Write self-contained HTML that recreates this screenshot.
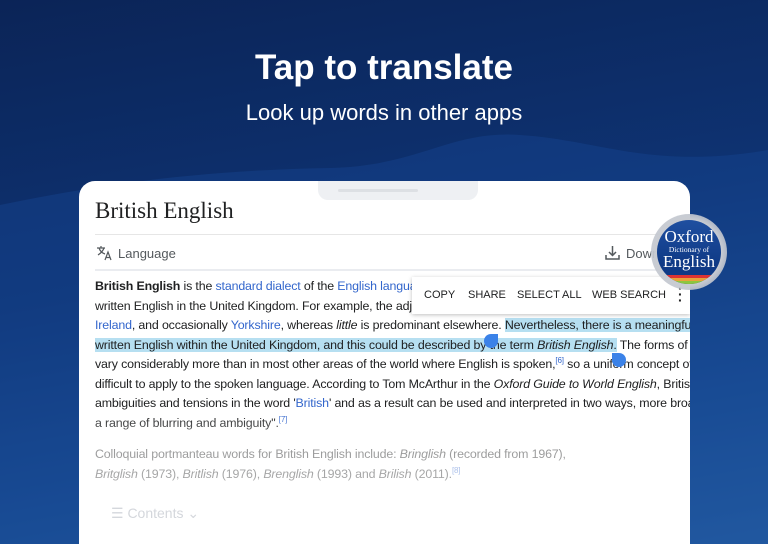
<!DOCTYPE html>
<html style="overflow:hidden;height:544px"><head><meta charset="utf-8"><style>
body{margin:0;width:768px;height:544px;overflow:hidden;position:relative;font-family:"Liberation Sans",sans-serif;
background:linear-gradient(170deg,#0b2457 0%,#0e3373 45%,#1a4f96 75%,#2a68ad 100%);}
.wave{position:absolute;left:0;top:0}
h1{position:absolute;top:48px;width:100%;text-align:center;margin:0;color:#fff;font-size:35px;font-weight:bold}
.sub{position:absolute;top:100px;width:100%;text-align:center;color:#fff;font-size:22px}
.card{position:absolute;left:79px;top:181px;width:611px;height:363px;background:#fff;border-radius:16px 16px 0 0;overflow:hidden}
.notch{position:absolute;left:239px;top:0;width:160px;height:19px;background:#eef0f3;border-radius:0 0 10px 10px}
.notch i{position:absolute;left:20px;top:8px;width:80px;height:3px;background:#dde0e4;border-radius:2px}
.t{position:absolute;left:16px;top:17px;font-family:"Liberation Serif",serif;font-size:23px;color:#202122}
.hr{position:absolute;left:16px;right:0;height:1px;background:#e6e6e6}
.lang{position:absolute;left:39px;top:65px;font-size:13px;color:#54595d}
.body{position:absolute;left:16px;top:96px;width:640px;font-size:12.4px;letter-spacing:-0.15px;line-height:19.5px;color:#202122;white-space:nowrap}
a{color:#3366cc;text-decoration:none}
.hl{background:#b6dff1}
sup{font-size:8px;color:#3366cc;line-height:0}
.menu{position:absolute;left:333px;top:96px;width:278px;height:37px;background:#fff;box-shadow:0 1px 4px rgba(0,0,0,.25);font-size:11px;color:#202122}
.menu span{position:absolute;top:12px}
.fade{position:absolute;left:0;top:230px;width:100%;height:133px;background:linear-gradient(rgba(255,255,255,0) 0%,rgba(255,255,255,.55) 30%,rgba(255,255,255,.75) 100%)}
.logo{position:absolute;left:651px;top:214px;width:76px;height:76px;border-radius:50%;background:radial-gradient(circle,#c9ccd2 60%,rgba(160,170,190,.6) 100%)}
.logo .in{position:absolute;left:6px;top:6px;width:64px;height:64px;border-radius:50%;overflow:hidden;background:linear-gradient(#1f4fa0,#0f3a86 70%);color:#fff;font-family:"Liberation Serif",serif;text-align:center}
.dot{position:absolute;width:14px;height:14px;background:#3b82e8;border-radius:50%}
</style></head><body>
<svg class="wave" width="768" height="544"><path d="M0 205 C120 180 220 170 330 168 C420 166 450 130 520 135 C600 140 650 170 768 150 L768 544 L0 544Z" fill="#164590" opacity=".45"/></svg>
<h1>Tap to translate</h1>
<div class="sub">Look up words in other apps</div>
<div class="card">
<div class="notch"><i></i></div>
<div class="t">British English</div>
<div class="hr" style="top:53px"></div>
<svg style="position:absolute;left:17px;top:64px" width="16" height="16" viewBox="0 0 16 16" fill="none" stroke="#54595d" stroke-width="1.2"><path d="M1 3h8M5 1v2M3 3c1 3 3 5 6 6M8 3c-1 3-3 5-6 7M9 15l3-8 3 8M10 12.5h4"/></svg>
<div class="lang">Language</div>
<svg style="position:absolute;left:525px;top:63px" width="17" height="17" viewBox="0 0 17 17" fill="none" stroke="#54595d" stroke-width="1.5"><path d="M8.5 2v9M5 8l3.5 3.5L12 8M2 11v4h13v-4"/></svg>
<div class="lang" style="left:547px">Download</div>
<div class="hr" style="top:88px;height:2px;background:#eaecf0"></div>
<div class="body">
<b>British English</b> is the <a>standard dialect</a> of the <a>English language</a> as spoken and<br>
written English in the United Kingdom. For example, the adjective wee is almost exclusively used in<br>
<a>Ireland</a>, and occasionally <a>Yorkshire</a>, whereas <i>little</i> is predominant elsewhere. <span class="hl">Nevertheless, there is a meaningful</span><br>
<span class="hl">written English within the United Kingdom, and this could be described by the term <i>British English</i>.</span> The forms of<br>
vary considerably more than in most other areas of the world where English is spoken,<sup>[6]</sup> so a uniform concept of<br>
difficult to apply to the spoken language. According to Tom McArthur in the <i>Oxford Guide to World English</i>, British<br>
ambiguities and tensions in the word '<a>British</a>' and as a result can be used and interpreted in two ways, more broadly<br>
a range of blurring and ambiguity".<sup>[7]</sup><br>
<div style="height:12px"></div>
Colloquial portmanteau words for British English include: <i>Bringlish</i> (recorded from 1967),<br>
<i>Britglish</i> (1973), <i>Britlish</i> (1976), <i>Brenglish</i> (1993) and <i>Brilish</i> (2011).<sup>[8]</sup>
</div>
<div class="fade"></div>
<div style="position:absolute;left:32px;top:324px;font-size:14px;color:#d4d7dc">☰ Contents ⌄</div>
<div class="menu"><span style="left:12px">COPY</span><span style="left:56px">SHARE</span><span style="left:105px">SELECT ALL</span><span style="left:180px">WEB SEARCH</span><span style="left:266px;top:8px;font-size:14px;font-weight:bold;line-height:6px">·<br>·<br>·</span></div>
<div class="dot" style="left:405px;top:153px;border-radius:50% 0 50% 50%"></div>
<div class="dot" style="left:533px;top:172px;border-radius:0 50% 50% 50%"></div>
</div>
<div class="logo"><div class="in">
<div style="font-size:17px;margin-top:9px;line-height:16px">Oxford</div>
<div style="font-size:7.5px;line-height:9px">Dictionary of</div>
<div style="font-size:17px;line-height:15px">English</div>
<div style="position:absolute;left:0;bottom:0;width:64px;height:9px;background:linear-gradient(#d33 0 33%,#e8a33a 33% 66%,#8dc63f 66%)"></div>
</div></div>
</body></html>
